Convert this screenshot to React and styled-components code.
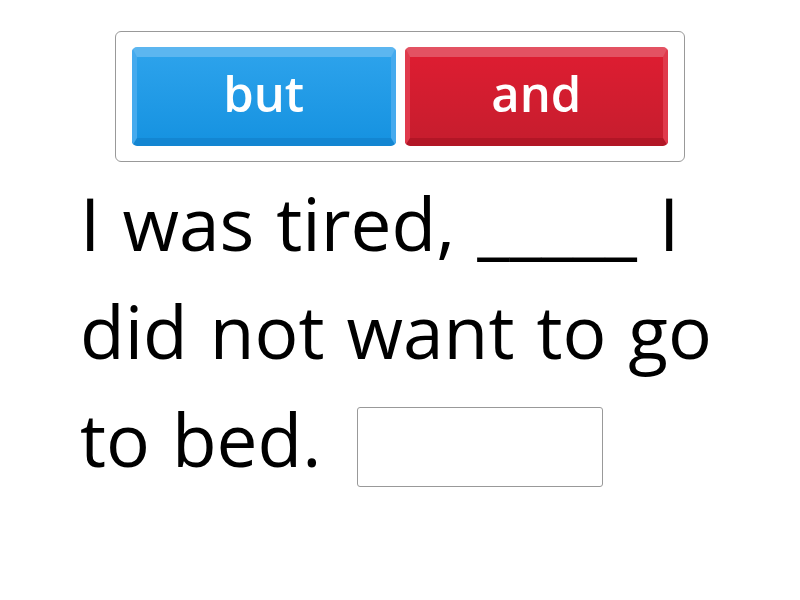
import React from "react"
import styled, { createGlobalStyle } from "styled-components"

const GlobalStyle = createGlobalStyle`
   html, body {
      margin: 0;
      padding: 0;
      background: #fff;
      font-family: "Open Sans", sans-serif;
   }
`

const Page = styled.div`
   width: 800px;
   height: 600px;
   display: flex;
   flex-direction: column;
   align-items: center;
   padding-top: 31px;
   box-sizing: border-box;
`

const Tray = styled.div`
   width: 570px;
   height: 131px;
   box-sizing: border-box;
   border: 1px solid #999;
   border-radius: 6px;
   display: flex;
   gap: 9px;
   padding: 15px 16px;
`

const palettes = {
   blue: {
      top: "#5cb6f0",
      side: "#45aaee",
      bottom: "#1386d2",
      from: "#2ca2eb",
      to: "#1793e1",
   },
   red: {
      top: "#e35262",
      side: "#e03a4c",
      bottom: "#b21626",
      from: "#dd1d31",
      to: "#c71d2e",
   },
}

const Tile = styled.div`
   flex: 1;
   box-sizing: border-box;
   border-radius: 5px;
   border-style: solid;
   border-width: 10px 5px 8px 5px;
   border-color: ${(p) => palettes[p.$color].top}
      ${(p) => palettes[p.$color].side}
      ${(p) => palettes[p.$color].bottom}
      ${(p) => palettes[p.$color].side};
   background: linear-gradient(
      ${(p) => palettes[p.$color].from},
      ${(p) => palettes[p.$color].to}
   );
   color: #fff;
   font-weight: 600;
   font-size: 49px;
   display: flex;
   align-items: center;
   justify-content: center;
   padding-bottom: 10px;
`

const Sentence = styled.div`
   width: 660px;
   margin-top: 7px;
   padding-left: 20px;
   font-size: 73px;
   line-height: 108px;
   color: #000;
`

const Word = styled.span`
   display: inline-block;
   margin-right: 22px;
`

const Gap = styled.span`
   display: inline-block;
   width: 246px;
   height: 80px;
   box-sizing: border-box;
   border: 1px solid #999;
   border-radius: 3px;
   vertical-align: -20px;
   margin-left: 14px;
`

const words = [
   "I",
   "was",
   "tired,",
   "_____",
   "I",
   "did",
   "not",
   "want",
   "to",
   "go",
   "to",
   "bed.",
]

export default function App() {
   return (
      <>
         <GlobalStyle />
         <Page>
            <Tray>
               <Tile $color="blue">but</Tile>
               <Tile $color="red">and</Tile>
            </Tray>
            <Sentence>
               {words.map((w, i) => (
                  <Word key={i}>{w}</Word>
               ))}
               <Gap />
            </Sentence>
         </Page>
      </>
   )
}
